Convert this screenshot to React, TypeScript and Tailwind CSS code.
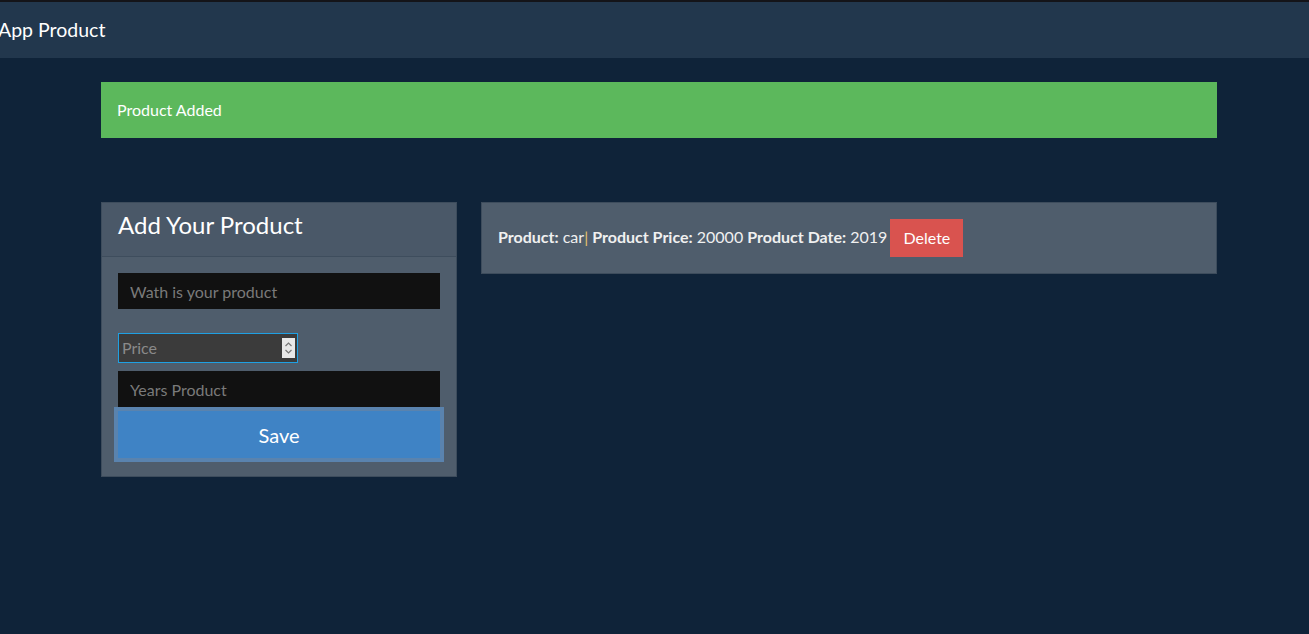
import React, { useState } from 'react';

interface Product {
  name: string;
  price: string;
  date: string;
}

const App: React.FC = () => {
  const [products, setProducts] = useState<Product[]>([{ name: 'car', price: '20000', date: '2019' }]);

  return (
    <div className="min-h-[634px] bg-[#0f2339] font-['Lato','Open_Sans',sans-serif] text-[16px]">
      <div className="h-[2px] bg-[#141419]" />
      <nav className="flex h-[56px] items-center bg-[#22374d]">
        <span className="-ml-[2px] text-[19.5px] text-white">App Product</span>
      </nav>

      <div className="ml-[101px] mr-[92px] pt-[24px]">
        <div className="flex h-[56px] items-center bg-[#5cb85c] px-[16px] text-white">Product Added</div>

        <div className="mt-[64px] flex items-start gap-[24px]">
          {/* formulario */}
          <div className="w-[356px] border border-[#3d4c5c] bg-[#4f5d6c]">
            <div className="flex h-[54px] items-center border-b border-[#3e4d5d] bg-[#4a5868] px-[16px] pb-[9px]">
              <h2 className="text-[24px] text-white">Add Your Product</h2>
            </div>
            <div className="px-[16px] pt-[16px] pb-[14px]">
              <input
                type="text"
                placeholder="Wath is your product"
                className="block h-[36px] w-full bg-[#111111] px-[12px] text-[16px] text-white placeholder:text-[#7a7a7a] outline-none"
              />
              <div className="mt-[24px] flex h-[30px] w-[180px] items-center border border-[#1fa0e3] bg-[#3b3b3b] pr-[2px]">
                <span className="flex-1 pl-[3px] text-[16px] text-[#8a8a8a]">Price</span>
                <div className="flex h-[20px] w-[13px] flex-col items-center justify-center bg-[#e8e8e8]">
                  <svg width="9" height="16" viewBox="0 0 9 16" fill="none" stroke="#777" strokeWidth="1.2">
                    <path d="M1.5 6 L4.5 3 L7.5 6" />
                    <path d="M1.5 10 L4.5 13 L7.5 10" />
                  </svg>
                </div>
              </div>
              <input
                type="text"
                placeholder="Years Product"
                className="mt-[8px] block h-[36px] w-full bg-[#111111] px-[12px] text-[16px] text-white placeholder:text-[#7a7a7a] outline-none"
              />
              <div className="-mx-[4px] border-[4px] border-[#5a83ae]">
                <button className="block h-[47px] w-full bg-[#3f83c5] text-[20px] text-white">Save</button>
              </div>
            </div>
          </div>

          {/* lista */}
          <div className="flex-1 border border-[#3d4c5c] bg-[#4f5d6c]">
            {products.map((p, i) => (
              <div key={i} className="flex h-[70px] items-center px-[16px] text-[#f0f0f0]">
                <span className="-mt-[2px]">
                  <b>Product:</b> {p.name}
                  <span className="text-[#e7c46b]">|</span> <b>Product Price:</b> {p.price} <b>Product Date:</b> {p.date}
                </span>
                <button
                  onClick={() => setProducts(products.filter((_, j) => j !== i))}
                  className="ml-[3px] h-[38px] w-[73px] bg-[#d9534f] text-[16px] text-white"
                >
                  Delete
                </button>
              </div>
            ))}
          </div>
        </div>
      </div>
    </div>
  );
};

export default App;
